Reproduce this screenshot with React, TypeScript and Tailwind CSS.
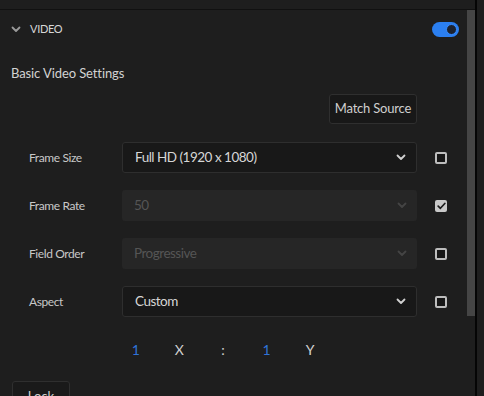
import React from "react";

function Chevron({ className }: { className?: string }) {
  return (
    <svg width="10" height="7" viewBox="0 0 10 7" fill="none" className={className}>
      <path d="M1.5 1.5 5 5l3.5-3.5" stroke="currentColor" strokeWidth="1.8" strokeLinecap="round" strokeLinejoin="round" />
    </svg>
  );
}

function Checkbox({ checked }: { checked?: boolean }) {
  if (checked) {
    return (
      <div className="flex h-[12px] w-[12px] items-center justify-center rounded-[2px] bg-[#c9c9c9]">
        <svg width="9" height="8" viewBox="0 0 9 8" fill="none">
          <path d="M1.2 4.2 3.4 6.3 7.8 1.5" stroke="#1b1b1b" strokeWidth="1.7" strokeLinecap="round" strokeLinejoin="round" />
        </svg>
      </div>
    );
  }
  return <div className="h-[12px] w-[12px] rounded-[2px] border-2 border-[#bdbdbd] bg-[#161616]" />;
}

interface RowProps {
  label: string;
  value: string;
  disabled?: boolean;
  checked?: boolean;
}

function SettingRow({ label, value, disabled, checked }: RowProps) {
  return (
    <div className="flex h-[31px] shrink-0 items-center">
      <div className="w-[93px] text-[12px] tracking-[-0.4px] text-[#c8c8c8]">{label}</div>
      <div
        className={
          disabled
            ? "flex h-[31px] w-[295px] items-center justify-between rounded-[3px] bg-[#262626] pl-[12px] pr-[10px] text-[#555555]"
            : "flex h-[31px] w-[295px] items-center justify-between rounded-[3px] border border-[#2e2e2e] bg-[#181818] pl-[12px] pr-[10px] text-[#d6d6d6]"
        }
      >
        <span className="text-[13.5px] tracking-[-0.5px]">{value}</span>
        <Chevron className={disabled ? "text-[#444444]" : "text-[#d0d0d0]"} />
      </div>
      <div className="ml-[18px]">
        <Checkbox checked={checked} />
      </div>
    </div>
  );
}

export default function App() {
  return (
    <div
      className="flex h-[396px] w-[484px] overflow-hidden bg-[#1e1e1e]"
      style={{ fontFamily: "Lato, 'Open Sans', sans-serif" }}
    >
      <div className="flex w-[475px] shrink-0 flex-col">
        <div className="h-[10px] shrink-0 border-b border-[#111111]" />
        <div className="flex shrink-0">
          {/* content */}
          <div className="flex w-[467px] shrink-0 flex-col">
            <div className="flex h-[38px] shrink-0 items-center justify-between pl-[11px] pr-[8px]">
              <div className="flex items-center gap-[9px]">
                <Chevron className="text-[#9a9a9a]" />
                <span className="text-[11px] tracking-[-0.3px] text-[#d6d6d6]">VIDEO</span>
              </div>
              <div className="flex h-[15px] w-[27px] items-center justify-end rounded-full bg-[#2b7ff0] pr-[2px]">
                <div className="h-[11px] w-[11px] rounded-full border border-[#3a8cff] bg-[#1b2230]" />
              </div>
            </div>

            <div className="mt-[16px] shrink-0 pl-[11px] text-[13px] leading-[18px] tracking-[-0.1px] text-[#d2d2d2]">
              Basic Video Settings
            </div>

            <div className="mt-[12px] flex shrink-0 justify-end pr-[50px]">
              <button className="h-[30px] w-[88px] rounded-[3px] border border-[#2f2f2f] bg-[#181818] text-[13px] tracking-[-0.2px] text-[#cfcfcf]">
                Match Source
              </button>
            </div>

            <div className="mt-[18px] flex shrink-0 flex-col gap-[17px] pl-[29px]">
              <SettingRow label="Frame Size" value="Full HD (1920 x 1080)" />
              <SettingRow label="Frame Rate" value="50" disabled checked />
              <SettingRow label="Field Order" value="Progressive" disabled />
              <SettingRow label="Aspect" value="Custom" />
            </div>

            <div className="ml-[114px] mt-[23px] grid w-[218px] shrink-0 grid-cols-5 text-center text-[14px] leading-[20px]">
              <span className="text-[#2f73d8]">1</span>
              <span className="text-[#d0d0d0]">X</span>
              <span className="text-[#d0d0d0]">:</span>
              <span className="text-[#2f73d8]">1</span>
              <span className="text-[#d0d0d0]">Y</span>
            </div>

            <div className="ml-[12px] mt-[21px] shrink-0">
              <button className="h-[32px] w-[58px] rounded-[3px] border border-[#2f2f2f] bg-[#1a1a1a] text-[13px] text-[#cfcfcf]">
                Lock
              </button>
            </div>
          </div>

          {/* scrollbar */}
          <div className="w-[8px] shrink-0">
            <div className="h-[306px] bg-[#454545]" />
          </div>
        </div>
      </div>
      <div className="w-[2px] shrink-0 bg-[#050505]" />
      <div className="flex-1 bg-[#1e1e1e]" />
    </div>
  );
}
